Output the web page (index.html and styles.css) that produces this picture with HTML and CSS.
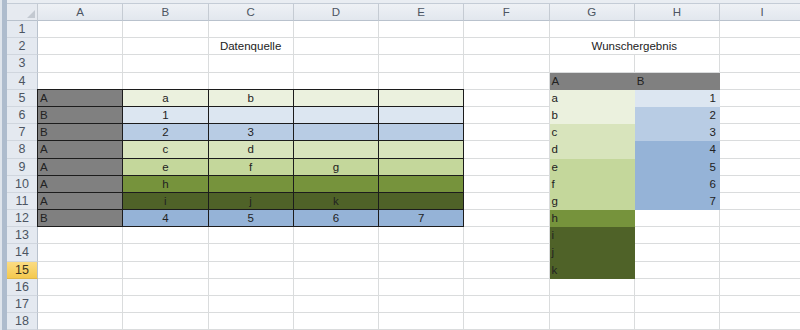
FILE: index.html
```html
<!DOCTYPE html>
<html lang="de">
<head>
    <meta charset="UTF-8">
    <meta name="viewport" content="width=device-width, initial-scale=1.0">
    <title>Mappe1</title>
    <link rel="stylesheet" href="styles.css">
</head>
<body>
    <div class="window">
        <div class="frame-left"></div>
        <div class="workbook">
            <div class="frame-top"></div>
            <div class="sheet" id="sheet"></div>
        </div>
    </div>

    <script>
        const COLS = ['A', 'B', 'C', 'D', 'E', 'F', 'G', 'H', 'I'];
        const ROWS = 18;
        const ACTIVE_ROW = 15;

        // Datenquelle: A5:E12 (key, fill, values for B..E)
        const source = [
            ['A', 'g1', ['a', 'b', '', '']],
            ['B', 'b1', ['1', '', '', '']],
            ['B', 'b2', ['2', '3', '', '']],
            ['A', 'g2', ['c', 'd', '', '']],
            ['A', 'g3', ['e', 'f', 'g', '']],
            ['A', 'g4', ['h', '', '', '']],
            ['A', 'g5', ['i', 'j', 'k', '']],
            ['B', 'b3', ['4', '5', '6', '7']]
        ];

        // Wunschergebnis: G5:H15 (letter, fill, number, fill)
        const result = [
            ['a', 'g1', '1', 'b1'],
            ['b', 'g1', '2', 'b2'],
            ['c', 'g2', '3', 'b2'],
            ['d', 'g2', '4', 'b3'],
            ['e', 'g3', '5', 'b3'],
            ['f', 'g3', '6', 'b3'],
            ['g', 'g3', '7', 'b3'],
            ['h', 'g4', '', ''],
            ['i', 'g5', '', ''],
            ['j', 'g5', '', ''],
            ['k', 'g5', '', '']
        ];

        // cells[row][col] = { text, classes }
        const cells = [];
        for (let r = 1; r <= ROWS; r++) {
            cells[r] = COLS.map(() => ({ text: '', classes: [] }));
        }

        cells[2][2] = { text: 'Datenquelle', classes: ['center'] };

        source.forEach(([key, fill, values], i) => {
            const r = 5 + i;
            cells[r][0] = { text: key, classes: ['fill-gray', 'framed', 'edge-left'] };
            values.forEach((v, j) => {
                cells[r][1 + j] = { text: v, classes: ['fill-' + fill, 'framed', 'center'] };
            });
            if (i === 0) cells[r].slice(0, 5).forEach(c => c.classes.push('edge-top'));
        });

        cells[4][6] = { text: 'A', classes: ['fill-gray'] };
        cells[4][7] = { text: 'B', classes: ['fill-gray'] };
        result.forEach(([letter, gFill, num, hFill], i) => {
            const r = 5 + i;
            cells[r][6] = { text: letter, classes: ['fill-' + gFill] };
            if (hFill) cells[r][7] = { text: num, classes: ['fill-' + hFill, 'right'] };
        });

        function el(cls, text) {
            const div = document.createElement('div');
            div.className = cls;
            if (text) div.textContent = text;
            return div;
        }

        const sheet = document.getElementById('sheet');

        // header row
        const corner = el('corner');
        corner.innerHTML = '<svg width="8" height="8" viewBox="0 0 8 8"><polygon points="8,0 8,8 0,8" fill="#c3c9d1"/></svg>';
        sheet.appendChild(corner);
        COLS.forEach(c => sheet.appendChild(el('col-head', c)));

        for (let r = 1; r <= ROWS; r++) {
            sheet.appendChild(el(r === ACTIVE_ROW ? 'row-head active' : 'row-head', String(r)));
            COLS.forEach((c, i) => {
                if (r === 2 && c === 'G') {
                    const merged = el('cell center merged', 'Wunschergebnis');
                    sheet.appendChild(merged);
                    return;
                }
                if (r === 2 && c === 'H') return;
                const cell = cells[r][i];
                sheet.appendChild(el(['cell'].concat(cell.classes).join(' '), cell.text));
            });
        }
    </script>
</body>
</html>
```

FILE: styles.css
```css
html, body {
    margin: 0;
    padding: 0;
    background: #fff;
    overflow: hidden;
}
body {
    font-family: "Liberation Sans", Arial, sans-serif;
    font-size: 11.5px;
    color: #222;
}
.window {
    display: flex;
    height: 330px;
}
.frame-left {
    width: 5px;
    flex: none;
    background: #aebccd;
    border-left: 2px solid #dfe5ec;
}
.workbook {
    flex: 1;
    display: flex;
    flex-direction: column;
    overflow: hidden;
}
.frame-top {
    height: 3px;
    flex: none;
    background: #e9edf2;
    border-bottom: 1px solid #c4ccd6;
}
.sheet {
    display: grid;
    grid-template-columns: 31px repeat(9, 85.25px);
    grid-template-rows: 17px repeat(18, 17.2px);
}
.sheet > div {
    box-sizing: border-box;
    white-space: nowrap;
    line-height: 16px;
}

/* headers */
.corner {
    display: flex;
    align-items: flex-end;
    justify-content: flex-end;
    padding: 0 2px 2px 0;
    background: #e6eaf0;
    border-right: 1px solid #c5cbd3;
    border-bottom: 1px solid #b9c2cd;
}
.col-head {
    text-align: center;
    color: #4c5562;
    background: linear-gradient(#eef1f5, #e2e7ee);
    border-right: 1px solid #c5cbd3;
    border-bottom: 1px solid #b9c2cd;
}
.row-head {
    text-align: center;
    font-size: 12.5px;
    color: #4c5562;
    background: #e4e9f0;
    border-right: 1px solid #b9c2cd;
    border-bottom: 1px solid #d0d6de;
}
.row-head.active {
    color: #3a3320;
    background: linear-gradient(#fbdc84, #f4c94f);
    border-bottom-color: #e0b84a;
}

/* cells */
.cell {
    padding: 0 2px;
    border-right: 1px solid #dadcdd;
    border-bottom: 1px solid #dadcdd;
    line-height: 16.2px;
}
.center { text-align: center; }
.right { text-align: right; padding-right: 3px; }
.merged { grid-column: span 2; }

.fill-gray { background: #808080; border-color: #808080; }
.fill-g1 { background: #ebf1de; border-color: #ebf1de; }
.fill-g2 { background: #d8e4bc; border-color: #d8e4bc; }
.fill-g3 { background: #c4d79b; border-color: #c4d79b; }
.fill-g4 { background: #76933c; border-color: #76933c; }
.fill-g5 { background: #4f6228; border-color: #4f6228; }
.fill-b1 { background: #dce6f1; border-color: #dce6f1; }
.fill-b2 { background: #b8cce4; border-color: #b8cce4; }
.fill-b3 { background: #95b3d7; border-color: #95b3d7; }

/* thin frame around the source table */
.framed { border-color: #1c1c1c; }
.edge-top { box-shadow: 0 -1px 0 #1c1c1c; }
.edge-left { box-shadow: -1px 0 0 #1c1c1c; }
.edge-top.edge-left { box-shadow: -1px 0 0 #1c1c1c, 0 -1px 0 #1c1c1c, -1px -1px 0 #1c1c1c; }
```
